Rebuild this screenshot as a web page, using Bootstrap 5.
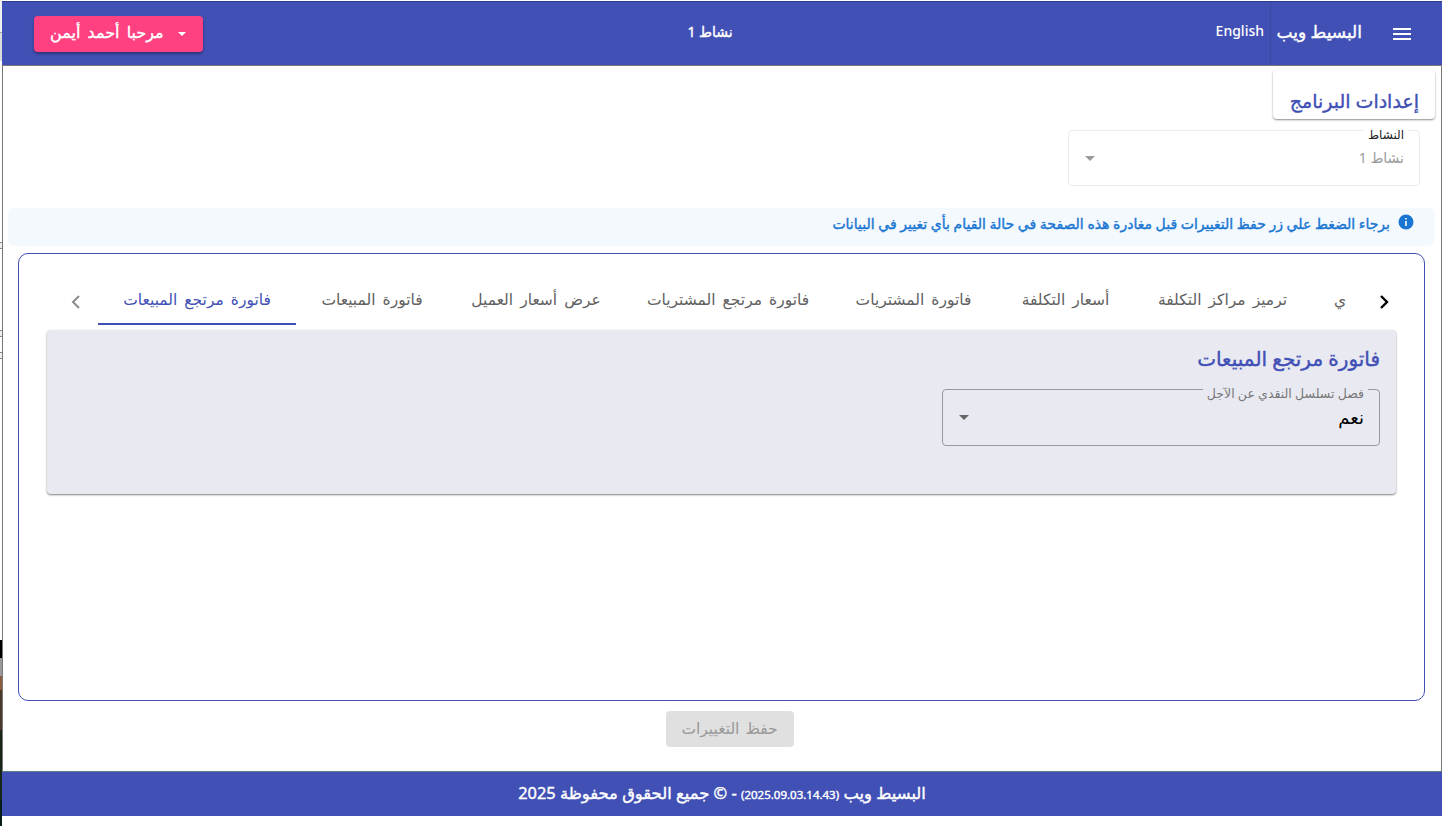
<!DOCTYPE html>
<html lang="ar" dir="rtl">
<head>
<meta charset="utf-8">
<meta name="viewport" content="width=device-width, initial-scale=1">
<title>إعدادات البرنامج</title>
<link href="https://cdn.jsdelivr.net/npm/bootstrap@5.3.0/dist/css/bootstrap.min.css" rel="stylesheet">
<style>
:root { --brand: #4150b5; }
body { font-family: "Noto Sans", "DejaVu Sans", sans-serif; font-size: 14px; line-height: 20px; background: #fff; overflow: hidden; color: #111; }
.shell { height: 826px; }
.edge { width: 2px; background: linear-gradient(#f0f0f0 0 32px, #aaa 32px 33px, #ddd 33px 61px, #fff 61px 242px, #888 242px 243px, #eee 243px 248px, #888 248px 249px, #fff 249px 330px, #888 330px 331px, #eee 331px 336px, #888 336px 337px, #fff 337px 352px, #888 352px 353px, #eee 353px 358px, #888 358px 359px, #fff 359px 640px, #000 640px 658px, #999 658px 676px, #8a5c40 676px 690px, #4a3929 690px 730px, #182619 730px 800px, #071c16 800px); }
.topbar { height: 64px; margin-top: 1px; background: var(--brand); border-top: 1px solid #2c3a8c; color: #fff; padding: 0 28px 0 32px; }
.side { width: 420px; }
.t { white-space: nowrap; display: inline-block; }
.med { -webkit-text-stroke: .4px currentColor; }
.brandname { font-size: 17px; width: 86px; margin-right: 28px; padding-bottom: 4px; }
.lang { border-right: 1px solid #394aa5; align-self: stretch; margin-right: 5px; padding-right: 6px; padding-top: 19px; font-size: 14px; font-weight: 500; }
.activity { padding-bottom: 4px; position: relative; left: -14px; }
.userbtn { width: 169px; height: 36px; border-radius: 4px; background: #ff4081; box-shadow: 0 2px 3px rgba(0,0,0,.35); padding: 0 16px 0; }
.username { font-size: 16px; word-spacing: 3px; padding-bottom: 4px; }
.main { border: 1px solid #777; border-bottom-color: #5c8080; height: 707px; padding: 4px 6px 0 5px; }
.titlecard { width: 162px; height: 49px; border-radius: 4px; box-shadow: 0 1px 2px rgba(0,0,0,.45); color: var(--brand); padding: 20px 16px 0; }
.h-md { font-size: 19px; line-height: 22px; }
.paneltitle { font-size: 20px; color: var(--brand); }
.field { border: 1px solid; border-radius: 4px; position: relative; padding: 17px 15px 0 16px; }
.field-label { position: absolute; font-size: 12.5px; line-height: 14px; top: -3px; right: 11px; padding: 0 4px; }
.field-off { width: 352px; height: 56px; margin: 11px 15px 0 0; border-color: #ececec; color: #9a9a9a; }
.field-off .field-label { color: #222; background: #fff; font-size: 12px; }
.field-on { width: 438px; height: 57px; margin-top: 18px; border-color: #9898a0; color: #000; font-size: 18px; }
.field-on .field-label { color: #777; background: #e9e9f2; }
.notice { height: 38px; margin-top: 22px; border-radius: 7px; background: #f4f9fe; color: #1976d2; padding: 6px 21px 0; }
.frame { height: 448px; margin: 7px 10px 0; border: 1px solid var(--brand); border-radius: 10px; padding: 27px 28px 0; }
.tabs { height: 49px; }
.tablist { flex: none; width: 1248px; font-size: 15.5px; word-spacing: 3px; color: #616161; }
.tab { flex: none; text-align: center; padding-top: 8px; height: 44px; }
.tab.on { color: var(--brand); border-bottom: 2px solid var(--brand); }
.arrow { flex: none; width: 51px; padding: 10px 0 0 6px; text-align: center; }
.arrow.next { width: 50px; padding-left: 26px; }
.panelbox { height: 164px; background: #e9e9f2; border-radius: 4px; box-shadow: 0 1px 2px rgba(0,0,0,.5); padding: 18px 16px; }
.savebtn { width: 128px; height: 36px; margin: 10px auto 0; border-radius: 4px; background: #e0e0e0; color: #999; position: relative; left: 8px; padding-bottom: 2px; font-size: 15.5px; word-spacing: 2px; }
.foot { height: 44px; background: var(--brand); color: #fff; font-size: 16.4px; }
.foot small { font-size: 11.5px; }
</style>
</head>
<body>
<div class="shell d-flex" dir="ltr">
  <div class="edge"></div>
  <div class="flex-grow-1" dir="rtl">
    <header class="topbar d-flex align-items-center justify-content-between">
      <div class="side d-flex align-items-center h-100">
        <svg width="24" height="24" viewBox="0 0 24 24" fill="#fff"><path d="M3 18h18v-2H3v2zm0-5h18v-2H3v2zm0-7v2h18V6H3z"/></svg>
        <span class="t med brandname">البسيط ويب</span>
        <span class="lang" lang="en">English</span>
      </div>
      <span class="t med activity">نشاط 1</span>
      <div class="side d-flex justify-content-end">
        <div class="userbtn d-flex align-items-center justify-content-between">
          <svg width="10" height="6" viewBox="0 0 10 6" fill="#fff"><path d="M1 1h8L5 5z"/></svg>
          <span class="t med username">مرحبا أحمد أيمن</span>
        </div>
      </div>
    </header>
    <main class="main">
      <div class="titlecard"><span class="t med h-md">إعدادات البرنامج</span></div>
      <div class="field field-off d-flex justify-content-between">
        <span class="field-label">النشاط</span>
        <span class="t">نشاط 1</span>
        <svg class="mt-2" width="10" height="5" viewBox="0 0 10 5" fill="#999"><path d="M0 0h10L5 5z"/></svg>
      </div>
      <div class="notice d-flex">
        <svg width="16" height="16" viewBox="0 0 16 16"><circle cx="8" cy="8" r="7.5" fill="#1976d2"/><path fill="#fff" d="M7.2 4h1.6v1.6H7.2zM7.2 7h1.6v5H7.2z"/></svg>
        <span class="t med me-2">برجاء الضغط علي زر حفظ التغييرات قبل مغادرة هذه الصفحة في حالة القيام بأي تغيير في البيانات</span>
      </div>
      <section class="frame">
        <div class="tabs d-flex" dir="ltr">
          <div class="arrow"><svg width="10" height="14" viewBox="0 0 10 14" fill="none" stroke="#8c8c8c" stroke-width="2"><path d="M8 1 2 7l6 6"/></svg></div>
          <div class="tablist d-flex overflow-hidden">
            <div class="tab on" style="width:198px" dir="rtl"><span class="t">فاتورة مرتجع المبيعات</span></div>
            <div class="tab" style="width:152px" dir="rtl"><span class="t">فاتورة المبيعات</span></div>
            <div class="tab" style="width:176px" dir="rtl"><span class="t">عرض أسعار العميل</span></div>
            <div class="tab" style="width:208px" dir="rtl"><span class="t">فاتورة مرتجع المشتريات</span></div>
            <div class="tab" style="width:163px" dir="rtl"><span class="t">فاتورة المشتريات</span></div>
            <div class="tab" style="width:141px" dir="rtl"><span class="t">أسعار التكلفة</span></div>
            <div class="tab" style="width:173px" dir="rtl"><span class="t">ترميز مراكز التكلفة</span></div>
            <div class="tab" style="width:62px" dir="rtl"><span class="t">ي</span></div>
          </div>
          <div class="arrow next"><svg width="10" height="14" viewBox="0 0 10 14" fill="none" stroke="#000" stroke-width="2.4"><path d="m2 1 6 6-6 6"/></svg></div>
        </div>
        <div class="panelbox">
          <span class="t med h-md paneltitle">فاتورة مرتجع المبيعات</span>
          <div class="field field-on d-flex justify-content-between">
            <span class="field-label"><span class="t">فصل تسلسل النقدي عن الآجل</span></span>
            <span class="t">نعم</span>
            <svg class="mt-2" width="10" height="5" viewBox="0 0 10 5" fill="#666"><path d="M0 0h10L5 5z"/></svg>
          </div>
        </div>
      </section>
      <div class="savebtn d-flex align-items-center justify-content-center"><span class="t">حفظ التغييرات</span></div>
    </main>
    <footer class="foot d-flex align-items-center justify-content-center"><span class="t med">البسيط ويب <small>(2025.09.03.14.43)</small> - © جميع الحقوق محفوظة 2025</span></footer>
  </div>
</div>
<script src="https://cdn.jsdelivr.net/npm/bootstrap@5.3.0/dist/js/bootstrap.bundle.min.js"></script>
</body>
</html>
